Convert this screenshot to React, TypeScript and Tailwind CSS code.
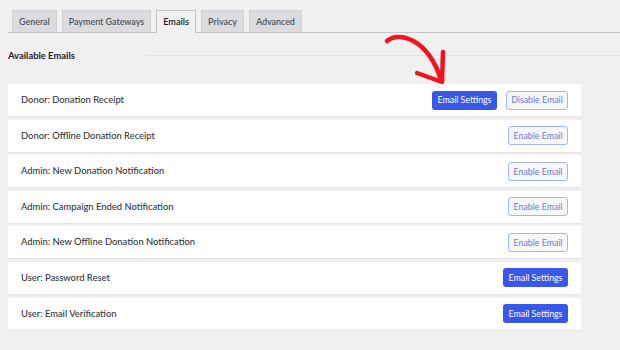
import React from 'react';

const tabs = ['General', 'Payment Gateways', 'Emails', 'Privacy', 'Advanced'];

const emails = [
  { name: 'Donor: Donation Receipt', settings: true, toggle: 'Disable Email' },
  { name: 'Donor: Offline Donation Receipt', settings: false, toggle: 'Enable Email' },
  { name: 'Admin: New Donation Notification', settings: false, toggle: 'Enable Email' },
  { name: 'Admin: Campaign Ended Notification', settings: false, toggle: 'Enable Email' },
  { name: 'Admin: New Offline Donation Notification', settings: false, toggle: 'Enable Email' },
  { name: 'User: Password Reset', settings: true, toggle: null },
  { name: 'User: Email Verification', settings: true, toggle: null },
];

function Arrow() {
  return (
    <svg className="absolute left-0 top-0 pointer-events-none" width="620" height="350" viewBox="0 0 620 350">
      <path d="M387 41 C 398 31, 428 38, 441 80" fill="none" stroke="#f0141c" strokeWidth="4.5" strokeLinecap="round" />
      <path d="M443 52 L442 82 L417 73" fill="none" stroke="#f0141c" strokeWidth="4.5" strokeLinecap="round" strokeLinejoin="round" />
    </svg>
  );
}

export default function App() {
  return (
    <div className="relative w-[620px] h-[350px] overflow-hidden bg-[#f0f0f1] font-['Lato',sans-serif] text-[#3c434a]">
      <div className="flex gap-[5px] pl-[4px] pt-[10px] ml-[8px] border-b border-[#c3c4c7]">
        {tabs.map((t) => (
          <div
            key={t}
            className={
              t === 'Emails'
                ? 'h-[23px] -mb-px px-[6px] flex items-center text-[9.2px] font-semibold text-[#1d2327] bg-[#f0f0f1] border border-b-0 border-[#c3c4c7]'
                : 'h-[22px] px-[6px] flex items-center text-[9px] font-semibold tracking-[-0.05px] text-[#50575e] bg-[#dcdcde] border border-b-0 border-[#d0d1d4]'
            }
          >
            {t}
          </div>
        ))}
      </div>

      <div className="flex items-center h-[26px] mt-[10px] pl-[8px]">
        <span className="text-[9.4px] font-bold text-[#1d2327]">Available Emails</span>
        <div className="ml-auto w-[473px] border-t border-[#e2e2e4] -mt-[2px]" />
      </div>

      <div className="flex flex-col gap-[3.6px] mt-[15px] ml-[8px] w-[573px]">
        {emails.map((e) => (
          <div key={e.name} className="h-[32px] bg-white flex items-center pl-[13px] pr-[13px] shadow-[0_1px_1px_rgba(0,0,0,0.04)]">
            <span className="text-[9.4px] font-medium text-[#32373c]">{e.name}</span>
            <div className="ml-auto flex items-center gap-[9px]">
              {e.settings && (
                <div className="h-[19px] w-[65px] flex items-center justify-center rounded-[3px] bg-[#3858e9] text-white text-[8.8px]">
                  Email Settings
                </div>
              )}
              {e.toggle && (
                <div className={(e.toggle === 'Disable Email' ? 'w-[62px]' : 'w-[60px]') + ' h-[19px] flex items-center justify-center rounded-[3px] border border-[#a7b4f4] bg-[#f6f7f7] text-[#6a78e6] text-[8.8px]'}>
                  {e.toggle}
                </div>
              )}
            </div>
          </div>
        ))}
      </div>

      <Arrow />
    </div>
  );
}
